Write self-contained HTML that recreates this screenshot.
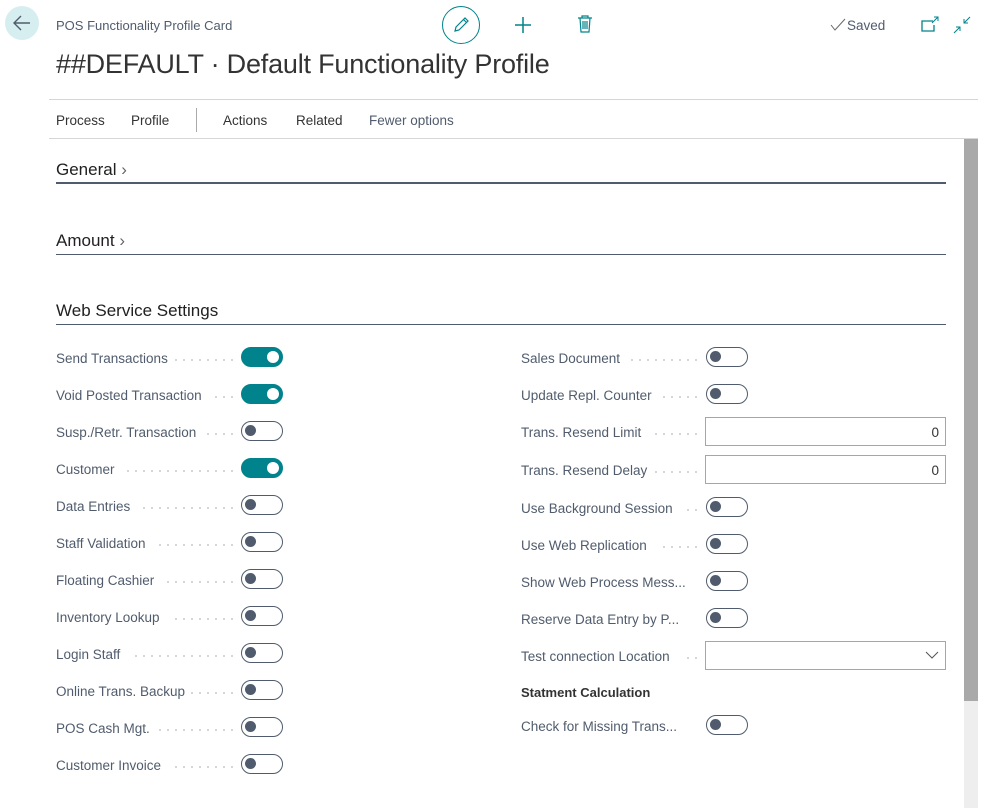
<!DOCTYPE html>
<html><head><meta charset="utf-8"><style>
*{margin:0;padding:0;box-sizing:border-box}
body{width:981px;height:808px;overflow:hidden;background:#fff;font-family:"Liberation Sans",sans-serif;color:#212121;position:relative}
.a{position:absolute;white-space:nowrap}
.lbl{position:absolute;font-size:13.5px;color:#505c6d;white-space:nowrap;line-height:16px;margin-top:1px}
.dots{position:absolute;height:2px;background-image:radial-gradient(circle,#c8c8c8 0.8px,transparent 1px);background-size:8px 2px;background-repeat:repeat-x;margin-top:1px}
.tg{position:absolute;width:42px;height:20px;border-radius:10px;border:1.5px solid #505c6d;background:#fff}
.tg::after{content:"";position:absolute;left:3px;top:3px;width:11px;height:11px;border-radius:50%;background:#505c6d}
.tg.on{background:#00838c;border-color:#00838c}
.tg.on::after{left:auto;right:3px;top:2.5px;width:12px;height:12px;background:#fff}
.inp{position:absolute;left:705px;width:241px;height:29px;border:1px solid #a6a6a6;font-size:13.5px;text-align:right;padding:7px 6px 0 0;color:#333}
.sec{position:absolute;left:56px;font-size:17px;color:#212121}
.ln{position:absolute;left:56px;width:890px;background:#505c6d}
.nav{position:absolute;top:113px;font-size:13.5px;color:#333}
</style></head><body>
<div class="a" style="left:5px;top:6px;width:34px;height:34px;border-radius:50%;background:#d7eef0"></div>
<svg class="a" style="left:12px;top:14px" width="20" height="18" viewBox="0 0 20 18"><path d="M18 9H3M9 2L2 9l7 7" fill="none" stroke="#505c6d" stroke-width="1.4"/></svg>
<div class="a" style="left:56px;top:18px;font-size:13px;color:#505c6d">POS Functionality Profile Card</div>
<div class="a" style="left:56px;top:49px;font-size:27px;color:#333;letter-spacing:-0.2px">##DEFAULT · Default Functionality Profile</div>
<div class="a" style="left:442px;top:6px;width:38px;height:38px;border-radius:50%;border:1.3px solid #00838c"></div>
<svg class="a" style="left:451px;top:15px" width="20" height="20" viewBox="0 0 20 20"><path d="M4 16l1-4L14 3l3 3-9 9z M12.5 4.5l3 3" fill="none" stroke="#00838c" stroke-width="1.2"/></svg>
<svg class="a" style="left:513px;top:15px" width="20" height="20" viewBox="0 0 20 20"><path d="M10 2v16M2 10h16" stroke="#00838c" stroke-width="1.5"/></svg>
<svg class="a" style="left:577px;top:15px" width="16" height="18" viewBox="0 0 16 18"><path d="M1 3h14M5 3V1h6v2M3 3l1 14h8l1-14M6 6v8M8 6v8M10 6v8" fill="none" stroke="#00838c" stroke-width="1.2"/></svg>
<svg class="a" style="left:830px;top:18px" width="16" height="14" viewBox="0 0 16 14"><path d="M1 7l4 5L15 1" fill="none" stroke="#666" stroke-width="1"/></svg>
<div class="a" style="left:847px;top:18px;font-size:13.5px;color:#505c6d">Saved</div>
<svg class="a" style="left:921px;top:16px" width="18" height="16" viewBox="0 0 18 16"><path d="M12 5H1v10h12V9" fill="none" stroke="#00838c" stroke-width="1.3"/><path d="M11 7l6-6M13 1h4v4" fill="none" stroke="#00838c" stroke-width="1"/></svg>
<svg class="a" style="left:953px;top:16px" width="18" height="18" viewBox="0 0 18 18"><path d="M17 1l-6 6M11 3v4h4M1 17l6-6M7 15v-4H3" fill="none" stroke="#00838c" stroke-width="1"/></svg>
<div class="a" style="left:49px;top:99px;width:929px;height:1px;background:#d6d6d6"></div>
<div class="nav" style="left:56px">Process</div>
<div class="nav" style="left:131px">Profile</div>
<div class="a" style="left:196px;top:108px;width:1px;height:24px;background:#aaa"></div>
<div class="nav" style="left:223px">Actions</div>
<div class="nav" style="left:296px">Related</div>
<div class="nav" style="left:369px;color:#505c6d">Fewer options</div>
<div class="a" style="left:49px;top:138px;width:929px;height:1px;background:#d6d6d6"></div>
<div class="a" style="left:964px;top:139px;width:14px;height:562px;background:#a9a9a9"></div>
<div class="a" style="left:964px;top:701px;width:14px;height:107px;background:#eee"></div>
<div class="sec" style="top:160px">General<span style="color:#666;font-weight:300"> ›</span></div>
<div class="ln" style="top:182px;height:2px"></div>
<div class="sec" style="top:231px">Amount<span style="color:#666;font-weight:300"> ›</span></div>
<div class="ln" style="top:254px;height:1px"></div>
<div class="sec" style="top:301px">Web Service Settings</div>
<div class="ln" style="top:324px;height:1px"></div>

<div class="lbl" style="left:56px;top:350px">Send Transactions</div><div class="dots" style="left:172px;width:64px;top:358px"></div><div class="tg on" style="left:241px;top:347px"></div>
<div class="lbl" style="left:56px;top:387px">Void Posted Transaction</div><div class="dots" style="left:212px;width:24px;top:395px"></div><div class="tg on" style="left:241px;top:384px"></div>
<div class="lbl" style="left:56px;top:424px">Susp./Retr. Transaction</div><div class="dots" style="left:204px;width:32px;top:432px"></div><div class="tg" style="left:241px;top:421px"></div>
<div class="lbl" style="left:56px;top:461px">Customer</div><div class="dots" style="left:124px;width:112px;top:469px"></div><div class="tg on" style="left:241px;top:458px"></div>
<div class="lbl" style="left:56px;top:498px">Data Entries</div><div class="dots" style="left:140px;width:96px;top:506px"></div><div class="tg" style="left:241px;top:495px"></div>
<div class="lbl" style="left:56px;top:535px">Staff Validation</div><div class="dots" style="left:156px;width:80px;top:543px"></div><div class="tg" style="left:241px;top:532px"></div>
<div class="lbl" style="left:56px;top:572px">Floating Cashier</div><div class="dots" style="left:164px;width:72px;top:580px"></div><div class="tg" style="left:241px;top:569px"></div>
<div class="lbl" style="left:56px;top:609px">Inventory Lookup</div><div class="dots" style="left:172px;width:64px;top:617px"></div><div class="tg" style="left:241px;top:606px"></div>
<div class="lbl" style="left:56px;top:646px">Login Staff</div><div class="dots" style="left:132px;width:104px;top:654px"></div><div class="tg" style="left:241px;top:643px"></div>
<div class="lbl" style="left:56px;top:683px">Online Trans. Backup</div><div class="dots" style="left:188px;width:48px;top:691px"></div><div class="tg" style="left:241px;top:680px"></div>
<div class="lbl" style="left:56px;top:720px">POS Cash Mgt.</div><div class="dots" style="left:156px;width:80px;top:728px"></div><div class="tg" style="left:241px;top:717px"></div>
<div class="lbl" style="left:56px;top:757px">Customer Invoice</div><div class="dots" style="left:172px;width:64px;top:765px"></div><div class="tg" style="left:241px;top:754px"></div>

<div class="lbl" style="left:521px;top:350px">Sales Document</div><div class="dots" style="left:628px;width:72px;top:358px"></div><div class="tg" style="left:706px;top:347px"></div>
<div class="lbl" style="left:521px;top:387px">Update Repl. Counter</div><div class="dots" style="left:660px;width:40px;top:395px"></div><div class="tg" style="left:706px;top:384px"></div>
<div class="lbl" style="left:521px;top:424px">Trans. Resend Limit</div><div class="dots" style="left:652px;width:48px;top:432px"></div><div class="inp" style="top:417px">0</div>
<div class="lbl" style="left:521px;top:462px">Trans. Resend Delay</div><div class="dots" style="left:652px;width:48px;top:470px"></div><div class="inp" style="top:455px">0</div>
<div class="lbl" style="left:521px;top:500px">Use Background Session</div><div class="dots" style="left:684px;width:16px;top:508px"></div><div class="tg" style="left:706px;top:497px"></div>
<div class="lbl" style="left:521px;top:537px">Use Web Replication</div><div class="dots" style="left:660px;width:40px;top:545px"></div><div class="tg" style="left:706px;top:534px"></div>
<div class="lbl" style="left:521px;top:574px">Show Web Process Mess...</div><div class="tg" style="left:706px;top:571px"></div>
<div class="lbl" style="left:521px;top:611px">Reserve Data Entry by P...</div><div class="tg" style="left:706px;top:608px"></div>
<div class="lbl" style="left:521px;top:648px">Test connection Location</div><div class="dots" style="left:684px;width:16px;top:656px"></div>
<div class="inp" style="top:641px"></div>
<svg class="a" style="left:925px;top:651px" width="14" height="9" viewBox="0 0 14 9"><path d="M1 1l6 6 6-6" fill="none" stroke="#555" stroke-width="1"/></svg>
<div class="a" style="left:521px;top:685px;font-size:13px;font-weight:bold;color:#333">Statment Calculation</div>
<div class="lbl" style="left:521px;top:718px">Check for Missing Trans...</div><div class="tg" style="left:706px;top:715px"></div>
</body></html>
